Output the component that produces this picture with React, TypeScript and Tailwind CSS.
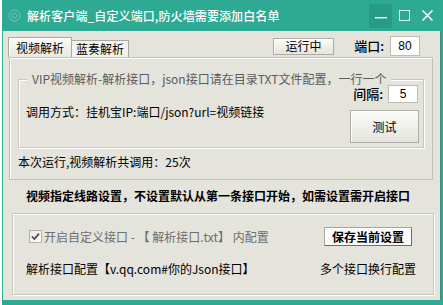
import React from 'react';

const Checkbox = () => (
  <div className="w-[13px] h-[13px] border border-[#b3b3ad] bg-gradient-to-br from-[#e9e9e4] to-[#fdfdfc] flex items-center justify-center">
    <svg width="9" height="9" viewBox="0 0 9 9">
      <path d="M1 4.5 L3.4 7 L8 1.6" stroke="#4a4a4a" strokeWidth="1.8" fill="none" />
    </svg>
  </div>
);

const WinButton = ({ className = '', children }: { className?: string; children: React.ReactNode }) => (
  <div
    className={`flex items-center justify-center border border-[#adada6] bg-gradient-to-b from-[#fbfbf9] to-[#e5e4dd] shadow-[inset_1px_1px_0_#ffffff] ${className}`}
  >
    {children}
  </div>
);

const Field = ({ value, className = '' }: { value: string; className?: string }) => (
  <div
    className={`flex items-center justify-center bg-white border border-[#bdbdb5] font-['Liberation_Sans',sans-serif] text-[12px] text-black ${className}`}
  >
    {value}
  </div>
);

export default function App() {
  return (
    <div className="w-[443px] h-[305px] bg-white flex overflow-hidden font-['Noto_Sans_CJK_SC',sans-serif] text-[12px] leading-[14px] text-black">
      <div className="ml-[2px] w-[441px] h-[305px] bg-[#2eaa94] flex flex-col pl-[1px] pr-[2px]">
        {/* title bar */}
        <div className="h-[31px] flex items-center shrink-0">
          <svg className="ml-[5px]" width="13" height="13" viewBox="0 0 13 13">
            <circle cx="6.5" cy="6.5" r="5.5" stroke="#ffffff" strokeOpacity="0.3" fill="none" />
            <circle cx="6.5" cy="6.5" r="2.5" stroke="#ffffff" strokeOpacity="0.3" fill="none" />
          </svg>
          <span className="ml-[6px] text-white font-medium text-[12px] tracking-[0.1px]">
            解析客户端_自定义端口,防火墙需要添加白名单
          </span>
          <div className="ml-auto flex items-center">
            <div className="w-[23px] h-[24px] bg-[#279b85] flex items-center justify-center">
              <svg width="12" height="24" viewBox="0 0 12 24">
                <rect x="0" y="13" width="12" height="1.4" fill="#ffffff" />
              </svg>
            </div>
            <svg className="ml-[7px]" width="11" height="11" viewBox="0 0 11 11">
              <rect x="0.5" y="0.5" width="10" height="10" stroke="#d8efe9" strokeWidth="1" fill="none" />
            </svg>
            <svg className="ml-[12px] mr-[8px]" width="11" height="11" viewBox="0 0 11 11">
              <path d="M0.5 0.5 L10.5 10.5 M10.5 0.5 L0.5 10.5" stroke="#ffffff" strokeWidth="1.5" />
            </svg>
          </div>
        </div>

        {/* client */}
        <div className="h-[269px] shrink-0 bg-[#e4e3dc] border-r border-[#3f8a7c] flex flex-col">
          {/* tab header */}
          <div className="h-[26px] flex items-end pl-[5px] shrink-0">
            <div className="h-[20px] w-[64px] flex items-center justify-center border border-b-0 border-[#aaa9a1] bg-gradient-to-b from-[#fafaf7] to-[#e9e8e1] shadow-[inset_1px_1px_0_#ffffff]">
              视频解析
            </div>
            <div className="h-[17px] w-[57px] flex items-center justify-center border border-l-0 border-b-0 border-[#aaa9a1] bg-[#f3f2ed]">
              蓝奏解析
            </div>
            <div className="ml-auto self-start mt-[5px] mr-[20px] flex items-center">
              <WinButton className="w-[61px] h-[17px]">运行中</WinButton>
              <span className="ml-[20px] text-[13px] font-medium">端口:</span>
              <Field value="80" className="ml-[6px] w-[30px] h-[20px]" />
            </div>
          </div>

          {/* tab panel */}
          <div className="ml-[6px] w-[424px] h-[123px] shrink-0 border border-[#c3c2b9] shadow-[inset_1px_1px_0_#ffffff] flex flex-col">
            <div className="relative mt-[21px] mx-[8px] h-[69px] border border-[#c8c7be] shadow-[inset_1px_1px_0_#ffffff,1px_1px_0_#ffffff] flex">
              <span className="absolute -top-[7px] left-[8px] px-[5px] leading-[12px] bg-[#e4e3dc] text-[#5b5b5b]">
                VIP视频解析-解析接口，json接口请在目录TXT文件配置，一行一个
              </span>
              <div className="pt-[25px] pl-[7px]">调用方式：挂机宝IP:端口/json?url=视频链接</div>
              <div className="ml-auto pt-[5px] pr-[4px] flex flex-col items-end gap-[7px]">
                <div className="flex items-center mr-[1px] h-[18px]">
                  <span className="text-[13px] font-medium leading-[14px]">间隔:</span>
                  <Field value="5" className="ml-[5px] w-[30px] h-[18px]" />
                </div>
                <WinButton className="w-[69px] h-[33px]">测试</WinButton>
              </div>
            </div>
            <div className="mt-[7px] pl-[8px]">本次运行,视频解析共调用：25次</div>
          </div>

          <div className="mt-[9px] pl-[23px] font-bold shrink-0">
            视频指定线路设置，不设置默认从第一条接口开始，如需设置需开启接口
          </div>

          <div className="mt-[10px] ml-[9px] w-[422px] h-[82px] shrink-0 border border-[#c8c7be] shadow-[inset_1px_1px_0_#ffffff,1px_1px_0_#ffffff] flex flex-col pt-[13px]">
            <div className="h-[19px] flex items-center pl-[16px] pr-[21px]">
              <Checkbox />
              <span className="ml-[2px] text-[#6e6e6e]">开启自定义接口 - 【 解析接口.txt】 内配置</span>
              <div className="ml-auto w-[88px] h-[19px] flex items-center justify-center font-bold bg-[#fbfbfa] border border-[#a5a59f] border-r-[#6d6d6d] border-b-[#6d6d6d] shadow-[inset_1px_1px_0_#ffffff]">
                保存当前设置
              </div>
            </div>
            <div className="mt-[16px] flex justify-between pl-[13px] pr-[17px]">
              <span>解析接口配置【v.qq.com#你的Json接口】</span>
              <span>多个接口换行配置</span>
            </div>
          </div>
        </div>
      </div>
    </div>
  );
}
